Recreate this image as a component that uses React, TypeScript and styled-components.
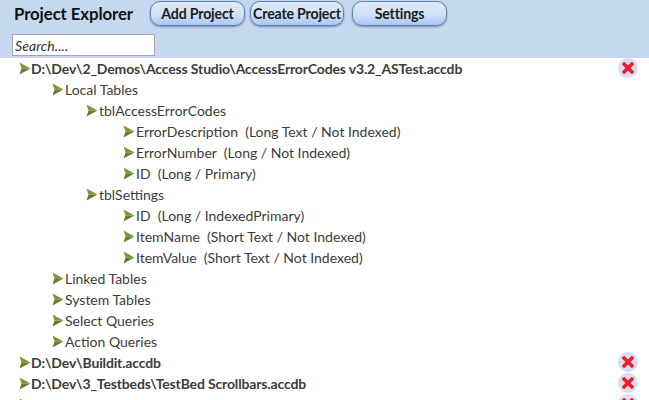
import styled, { createGlobalStyle } from 'styled-components';

const GlobalStyle = createGlobalStyle`
    html, body {
        margin: 0;
        padding: 0;
        background: #ffffff;
    }
`;

const Page = styled.div`
    width: 649px;
    height: 400px;
    overflow: hidden;
    font-family: 'Lato', 'Liberation Sans', sans-serif;
    color: #3c3c3c;
`;

const Toolbar = styled.div`
    height: 58px;
    background: #c6d8ef;
    box-sizing: border-box;
    padding: 1px 0 0 12px;
`;

const TopRow = styled.div`
    display: flex;
    align-items: flex-start;
`;

const Title = styled.div`
    width: 138px;
    padding: 2px 0 0 2px;
    box-sizing: border-box;
    font-size: 16.8px;
    font-weight: 700;
    color: #111;
    letter-spacing: -0.1px;
`;

const ToolButton = styled.button<{ $width: number; $gap: number }>`
    width: ${(props) => props.$width}px;
    height: 25px;
    margin-right: ${(props) => props.$gap}px;
    padding: 0;
    border: 1px solid #5b83b8;
    border-radius: 10px;
    background: linear-gradient(#e0ebfa 0%, #d0e0f6 55%, #a9c6f2 100%);
    box-shadow: 0 1px 2px rgba(50, 70, 110, 0.55);
    font-family: inherit;
    font-size: 14.2px;
    font-weight: 700;
    letter-spacing: -0.2px;
    color: #1c1c1c;
`;

const SearchBox = styled.input`
    display: block;
    width: 143px;
    height: 22px;
    margin-top: 8px;
    box-sizing: border-box;
    padding: 0 2px;
    border: 1px solid #a6a6a6;
    background: #fff;
    font-family: inherit;
    font-size: 14px;
    font-style: italic;
    letter-spacing: 0.1px;
    color: #333;
    &::placeholder {
        color: #333;
        opacity: 1;
    }
`;

const Tree = styled.div`
    display: flex;
    flex-direction: column;
`;

const Row = styled.div<{ $indent: number }>`
    display: flex;
    align-items: center;
    flex: none;
    height: 21px;
    padding-left: ${(props) => props.$indent}px;
    padding-right: 11px;
`;

const Label = styled.span<{ $bold?: boolean }>`
    flex: 1;
    margin-left: ${(props) => (props.$bold ? 0 : 1)}px;
    white-space: pre;
    font-size: 14px;
    letter-spacing: ${(props) => (props.$bold ? -0.15 : 0)}px;
    font-weight: ${(props) => (props.$bold ? 700 : 400)};
`;

const RemoveBadge = styled.span`
    display: flex;
    align-items: center;
    justify-content: center;
    flex: none;
    width: 20px;
    height: 20px;
    margin-bottom: 2px;
    border-radius: 50%;
    background: #dcdcf0;
`;

const Arrow = () => (
    <svg width="12" height="13" viewBox="0 0 12 13">
        <path d="M0.5 0.5 L11.5 6.5 L2.5 6.5 Z" fill="#7d9636" />
        <path d="M2.5 6.5 L11.5 6.5 L0.5 12.5 Z" fill="#647d2a" />
    </svg>
);

const RemoveIcon = () => (
    <svg width="12" height="12" viewBox="0 0 12 12">
        <path d="M2.2 2.2 L9.8 9.8 M9.8 2.2 L2.2 9.8" stroke="#f01c2c" strokeWidth="3.6" strokeLinecap="square" />
    </svg>
);

type Item = { text: string; indent: number; bold?: boolean };

const items: Item[] = [
    { text: 'D:\\Dev\\2_Demos\\Access Studio\\AccessErrorCodes v3.2_ASTest.accdb', indent: 19, bold: true },
    { text: 'Local Tables', indent: 52 },
    { text: 'tblAccessErrorCodes', indent: 86 },
    { text: 'ErrorDescription  (Long Text / Not Indexed)', indent: 123 },
    { text: 'ErrorNumber  (Long / Not Indexed)', indent: 123 },
    { text: 'ID  (Long / Primary)', indent: 123 },
    { text: 'tblSettings', indent: 86 },
    { text: 'ID  (Long / IndexedPrimary)', indent: 123 },
    { text: 'ItemName  (Short Text / Not Indexed)', indent: 123 },
    { text: 'ItemValue  (Short Text / Not Indexed)', indent: 123 },
    { text: 'Linked Tables', indent: 52 },
    { text: 'System Tables', indent: 52 },
    { text: 'Select Queries', indent: 52 },
    { text: 'Action Queries', indent: 52 },
    { text: 'D:\\Dev\\Buildit.accdb', indent: 19, bold: true },
    { text: 'D:\\Dev\\3_Testbeds\\TestBed Scrollbars.accdb', indent: 19, bold: true },
    { text: 'D:\\Dev\\3_Testbeds\\TestBed Treeview Demo\\TreeviewDemo v1.4.accdb', indent: 19, bold: true },
];

export default function App() {
    return (
        <Page>
            <GlobalStyle />
            <Toolbar>
                <TopRow>
                    <Title>Project Explorer</Title>
                    <ToolButton $width={95} $gap={5}>Add Project</ToolButton>
                    <ToolButton $width={94} $gap={8}>Create Project</ToolButton>
                    <ToolButton $width={95} $gap={0}>Settings</ToolButton>
                </TopRow>
                <SearchBox placeholder="Search...." />
            </Toolbar>
            <Tree>
                {items.map((item) => (
                    <Row key={item.text} $indent={item.indent}>
                        <Arrow />
                        <Label $bold={item.bold}>{item.text}</Label>
                        {item.bold && (
                            <RemoveBadge>
                                <RemoveIcon />
                            </RemoveBadge>
                        )}
                    </Row>
                ))}
            </Tree>
        </Page>
    );
}
